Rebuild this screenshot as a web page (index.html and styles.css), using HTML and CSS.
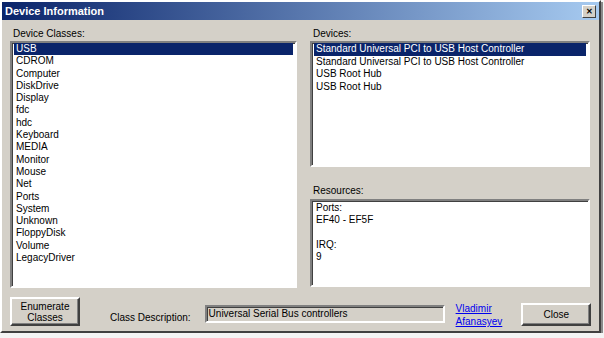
FILE: index.html
```html
<!DOCTYPE html>
<html lang="en">
<head>
  <meta charset="UTF-8">
  <title>Device Information</title>
  <link rel="stylesheet" href="styles.css">
</head>
<body>
  <div class="window">
    <div class="titlebar">
      <span class="title">Device Information</span>
      <span class="close-x">&#x2715;</span>
    </div>

    <div class="content">
      <div class="column">
        <div class="label">Device Classes:</div>
        <div class="listbox classes">
          <div class="item selected">USB</div>
          <div class="item">CDROM</div>
          <div class="item">Computer</div>
          <div class="item">DiskDrive</div>
          <div class="item">Display</div>
          <div class="item">fdc</div>
          <div class="item">hdc</div>
          <div class="item">Keyboard</div>
          <div class="item">MEDIA</div>
          <div class="item">Monitor</div>
          <div class="item">Mouse</div>
          <div class="item">Net</div>
          <div class="item">Ports</div>
          <div class="item">System</div>
          <div class="item">Unknown</div>
          <div class="item">FloppyDisk</div>
          <div class="item">Volume</div>
          <div class="item">LegacyDriver</div>
        </div>
      </div>

      <div class="column">
        <div class="label">Devices:</div>
        <div class="listbox devices">
          <div class="item selected">Standard Universal PCI to USB Host Controller</div>
          <div class="item">Standard Universal PCI to USB Host Controller</div>
          <div class="item">USB Root Hub</div>
          <div class="item">USB Root Hub</div>
        </div>

        <div class="label resources-label">Resources:</div>
        <div class="listbox resources">
          <div class="item">Ports:</div>
          <div class="item">EF40 - EF5F</div>
          <div class="item">&nbsp;</div>
          <div class="item">IRQ:</div>
          <div class="item">9</div>
        </div>
      </div>
    </div>

    <div class="bottom">
      <button class="btn enumerate">Enumerate<br>Classes</button>
      <span class="desc-label">Class Description:</span>
      <div class="desc-field">Universal Serial Bus controllers</div>
      <a class="author" href="#">Vladimir<br>Afanasyev</a>
      <button class="btn close">Close</button>
    </div>
  </div>
</body>
</html>
```

FILE: styles.css
```css
body {
  margin: 0;
  background: #f4f4f4;
  font-family: 'Liberation Sans', Arial, sans-serif;
  font-size: 10px;
  color: black;
}

.window {
  width: 597px;
  height: 329px;
  background: #d4d0c8;
  border-style: solid;
  border-width: 2px;
  border-color: #ffffff #404040 #404040 #ffffff;
  box-shadow: 2px 2px 0 #8a8a8a;
  display: flex;
  flex-direction: column;
}

.titlebar {
  height: 18px;
  background: linear-gradient(90deg, #0a246a, #a6caf0);
  display: flex;
  align-items: center;
  justify-content: space-between;
  padding: 0 3px 0 3px;
}

.title {
  color: white;
  font-weight: bold;
  font-size: 11px;
}

.close-x {
  width: 12px;
  height: 11px;
  background: #d4d0c8;
  border: 1px solid;
  border-color: #ffffff #404040 #404040 #ffffff;
  font-size: 8px;
  line-height: 11px;
  text-align: center;
  font-weight: bold;
}

.content {
  display: grid;
  grid-template-columns: 287px 280px;
  column-gap: 13px;
  padding: 7px 0 0 8px;
}

.column {
  display: flex;
  flex-direction: column;
}

.label {
  height: 14px;
  line-height: 13px;
  padding-left: 3px;
}

.listbox {
  background: white;
  border-style: solid;
  border-width: 2px;
  border-color: #808080 #ffffff #ffffff #808080;
  box-shadow: inset 1px 1px 0 #404040;
  padding: 0 2px;
  box-sizing: border-box;
}

.classes {
  height: 247px;
}

.devices {
  height: 126px;
}

.devices .item {
  height: 12.6px;
}

.resources-label {
  margin-top: 17px;
  margin-bottom: 1px;
}

.resources {
  height: 88px;
  padding-top: 1px;
}

.item {
  height: 12.3px;
  line-height: 12px;
  padding-left: 2px;
  white-space: nowrap;
}

.item.selected {
  background: #0a246a;
  color: white;
}

.bottom {
  display: flex;
  align-items: flex-end;
  padding: 9px 0 0 8px;
}

.btn {
  font-family: 'Liberation Sans', Arial, sans-serif;
  font-size: 10px;
  background: #d4d0c8;
  border-style: solid;
  border-width: 2px;
  border-color: #ffffff #404040 #404040 #ffffff;
  box-shadow: inset -1px -1px 0 #808080;
  padding: 0;
  color: black;
}

.enumerate {
  width: 70px;
  height: 29px;
  line-height: 11px;
}

.desc-label {
  margin-left: 30px;
  margin-bottom: 3px;
  white-space: nowrap;
}

.desc-field {
  width: 240px;
  height: 18px;
  box-sizing: border-box;
  margin-left: 14px;
  margin-bottom: 3px;
  border-style: solid;
  border-width: 2px;
  border-color: #808080 #ffffff #ffffff #808080;
  box-shadow: inset 1px 1px 0 #404040;
  padding-left: 2px;
  line-height: 13px;
  white-space: nowrap;
}

.author {
  margin-left: 11px;
  color: #0000ee;
  line-height: 13px;
  margin-bottom: -2px;
}

.close {
  width: 70px;
  height: 23px;
  margin-left: 19px;
}
```
